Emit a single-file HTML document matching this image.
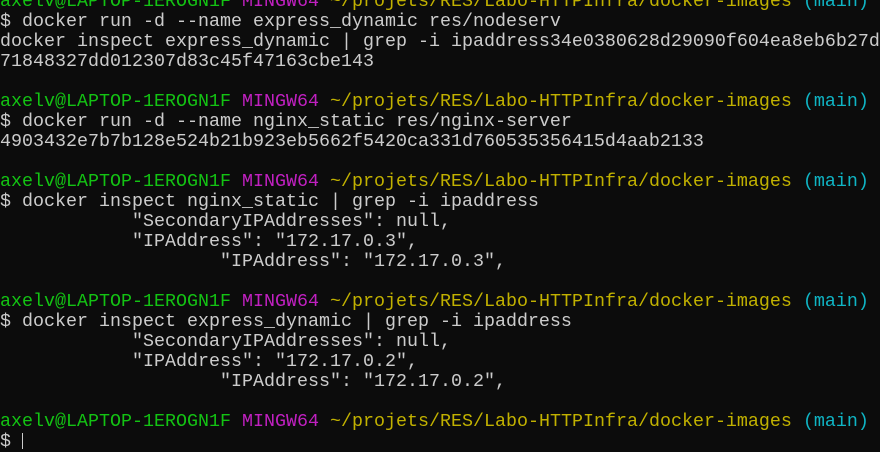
<!DOCTYPE html>
<html><head><meta charset="utf-8"><style>
html,body{margin:0;padding:0;background:#0c0c0c;width:880px;height:446px;overflow:hidden}
pre{margin:0;position:absolute;left:0;top:-8px;font-family:"Liberation Mono",monospace;font-size:18.33px;line-height:20px;color:#cccccc;white-space:pre}
.g{color:#13c313}.m{color:#c020c0}.y{color:#c1b100}.c{color:#0fb4c4}
.cur{display:inline-block;width:1px;height:16px;background:#ccc;vertical-align:-3px}
</style></head><body><pre><span class="g">axelv@LAPTOP-1EROGN1F</span> <span class="m">MINGW64</span> <span class="y">~/projets/RES/Labo-HTTPInfra/docker-images</span> <span class="c">(main)</span>
$ docker run -d --name express_dynamic res/nodeserv
docker inspect express_dynamic | grep -i ipaddress34e0380628d29090f604ea8eb6b27d
71848327dd012307d83c45f47163cbe143

<span class="g">axelv@LAPTOP-1EROGN1F</span> <span class="m">MINGW64</span> <span class="y">~/projets/RES/Labo-HTTPInfra/docker-images</span> <span class="c">(main)</span>
$ docker run -d --name nginx_static res/nginx-server
4903432e7b7b128e524b21b923eb5662f5420ca331d760535356415d4aab2133

<span class="g">axelv@LAPTOP-1EROGN1F</span> <span class="m">MINGW64</span> <span class="y">~/projets/RES/Labo-HTTPInfra/docker-images</span> <span class="c">(main)</span>
$ docker inspect nginx_static | grep -i ipaddress
            "SecondaryIPAddresses": null,
            "IPAddress": "172.17.0.3",
                    "IPAddress": "172.17.0.3",

<span class="g">axelv@LAPTOP-1EROGN1F</span> <span class="m">MINGW64</span> <span class="y">~/projets/RES/Labo-HTTPInfra/docker-images</span> <span class="c">(main)</span>
$ docker inspect express_dynamic | grep -i ipaddress
            "SecondaryIPAddresses": null,
            "IPAddress": "172.17.0.2",
                    "IPAddress": "172.17.0.2",

<span class="g">axelv@LAPTOP-1EROGN1F</span> <span class="m">MINGW64</span> <span class="y">~/projets/RES/Labo-HTTPInfra/docker-images</span> <span class="c">(main)</span>
$ <span class="cur"></span></pre></body></html>
